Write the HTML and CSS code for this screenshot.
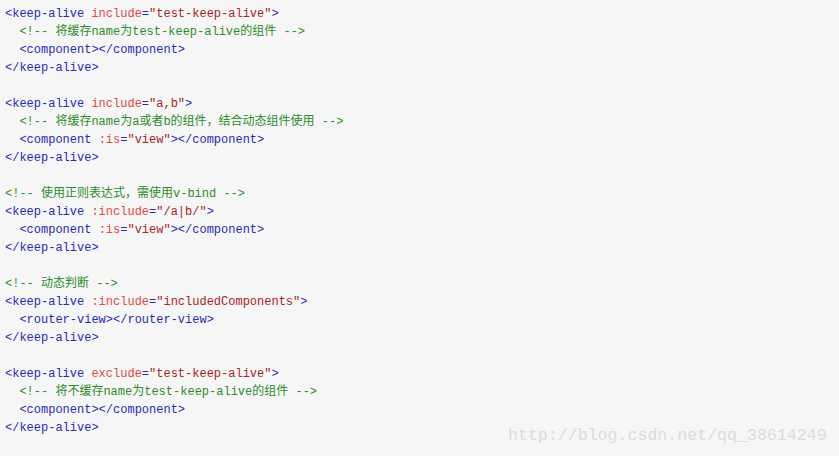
FILE: index.html
```html
<!DOCTYPE html>
<html>
<head>
<meta charset="UTF-8">
<title>keep-alive</title>
<link rel="stylesheet" href="styles.css">
</head>
<body>

	<div class="page">
<pre class="code"><span class="tag">&lt;keep-alive</span> <span class="attr">include</span><span class="tag">=</span><span class="str">"test-keep-alive"</span><span class="tag">&gt;</span>
  <span class="cmt">&lt;!-- 将缓存name为test-keep-alive的组件 --&gt;</span>
  <span class="tag">&lt;component&gt;&lt;/component&gt;</span>
<span class="tag">&lt;/keep-alive&gt;</span>

<span class="tag">&lt;keep-alive</span> <span class="attr">include</span><span class="tag">=</span><span class="str">"a,b"</span><span class="tag">&gt;</span>
  <span class="cmt">&lt;!-- 将缓存name为a或者b的组件，结合动态组件使用 --&gt;</span>
  <span class="tag">&lt;component</span> <span class="attr">:is</span><span class="tag">=</span><span class="str">"view"</span><span class="tag">&gt;&lt;/component&gt;</span>
<span class="tag">&lt;/keep-alive&gt;</span>

<span class="cmt">&lt;!-- 使用正则表达式，需使用v-bind --&gt;</span>
<span class="tag">&lt;keep-alive</span> <span class="attr">:include</span><span class="tag">=</span><span class="str">"/a|b/"</span><span class="tag">&gt;</span>
  <span class="tag">&lt;component</span> <span class="attr">:is</span><span class="tag">=</span><span class="str">"view"</span><span class="tag">&gt;&lt;/component&gt;</span>
<span class="tag">&lt;/keep-alive&gt;</span>

<span class="cmt">&lt;!-- 动态判断 --&gt;</span>
<span class="tag">&lt;keep-alive</span> <span class="attr">:include</span><span class="tag">=</span><span class="str">"includedComponents"</span><span class="tag">&gt;</span>
  <span class="tag">&lt;router-view&gt;&lt;/router-view&gt;</span>
<span class="tag">&lt;/keep-alive&gt;</span>

<span class="tag">&lt;keep-alive</span> <span class="attr">exclude</span><span class="tag">=</span><span class="str">"test-keep-alive"</span><span class="tag">&gt;</span>
  <span class="cmt">&lt;!-- 将不缓存name为test-keep-alive的组件 --&gt;</span>
  <span class="tag">&lt;component&gt;&lt;/component&gt;</span>
<span class="tag">&lt;/keep-alive&gt;</span></pre>
		<div class="mark">http://blog.csdn.net/qq_38614249</div>
	</div>

</body>
</html>
```

FILE: styles.css
```css
html, body{
	margin : 0;
	padding : 0;
	background : #f6f6f6;
}
.page{
	position : relative;
	width : 839px;
	height : 456px;
	overflow : hidden;
}
.code{
	margin : 0;
	padding : 5px 5px;
	font-family : "Liberation Mono", "Noto Sans CJK SC", monospace;
	font-size : 12px;
	line-height : 18px;
	color : #3030b8;
}
.tag{
	color : #2a2ab4;
}
.attr{
	color : #e24a44;
}
.str{
	color : #a82424;
}
.cmt{
	color : #2e8b2e;
}
/* 워터마크 */
.mark{
	position : absolute;
	left : 508px;
	top : 425px;
	font-family : "Liberation Mono", monospace;
	font-size : 16.6px;
	line-height : 22px;
	color : #dcdcdc;
}
```
